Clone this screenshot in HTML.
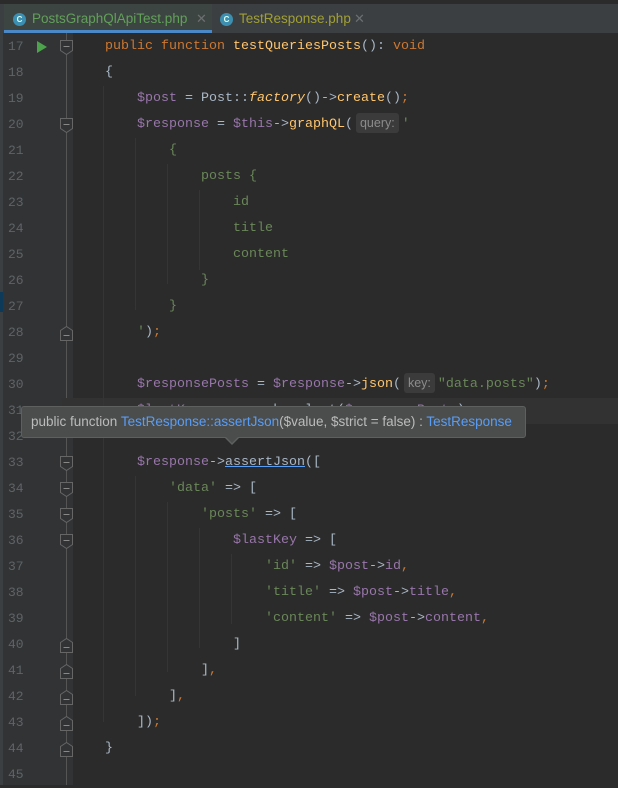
<!DOCTYPE html>
<html><head><meta charset="utf-8"><style>
*{margin:0;padding:0;box-sizing:border-box}
body{width:618px;height:785px;background:#2b2b2b;overflow:hidden;position:relative;font-family:"Liberation Mono",monospace;font-size:13.33px}
.tabs{position:absolute;left:0;top:0;width:618px;height:33px;background:#3c3f41;border-top:4px solid #2b2b2b}
.tab{position:absolute;top:0;height:29px;font-family:"Liberation Sans",sans-serif;font-size:13.5px;line-height:29px}
.ic{position:absolute;top:9px;width:13px;height:13px;border-radius:50%;background:#3c8fb0;color:#dfe;font-size:8px;line-height:13px;text-align:center;font-weight:bold}
.x{position:absolute;top:0;color:#6c6f71;font-size:13px}
.gut{position:absolute;left:3px;top:33px;width:70px;height:752px;background:#313335}
.strip{position:absolute;left:0;top:33px;width:3px;height:752px;background:#3c3f41}
.vl{position:absolute;left:66px;top:33px;width:1px;height:752px;background:#555}
.ln{position:absolute;left:8px;width:20px;color:#606366;font-size:13px;line-height:26px}
.code{position:absolute;left:105px;white-space:pre;line-height:26px;color:#a9b7c6}
.k{color:#cc7832}.f{color:#ffc66d}.v{color:#9876aa}.s{color:#6a8759}.i{font-style:italic}
.guide{position:absolute;width:1px;background:#353535}
.fold{position:absolute;left:60px;width:13px;height:15px}
.hint{display:inline-block;background:#3b3b3b;color:#8c8c8c;font-family:"Liberation Sans",sans-serif;font-size:12.5px;padding:0 4px;line-height:20px;border-radius:3px;margin:0 3px}
.tip{position:absolute;left:21px;top:406px;width:505px;height:32px;background:#4b4d4d;border:1px solid #5e6060;border-radius:3px;font-family:"Liberation Sans",sans-serif;font-size:13.5px;color:#bbbbbb;line-height:30px;padding-left:9px;white-space:nowrap}
.tip b{font-weight:normal;color:#589df6}
</style></head><body>
<svg width="0" height="0" style="position:absolute"><defs><symbol id="fo" viewBox="0 0 13 15"><path d="M0.5 4.5 L6.5 0.5 L12.5 4.5 V14.5 H0.5 Z" fill="#313335" stroke="#666"/><path d="M3.5 9.5 H9.5" stroke="#888"/></symbol><symbol id="fc" viewBox="0 0 13 15"><path d="M0.5 0.5 H12.5 V10.5 L6.5 14.5 L0.5 10.5 Z" fill="#313335" stroke="#666"/><path d="M3.5 6.5 H9.5" stroke="#888"/></symbol></defs></svg>
<div class="tabs">
 <div class="tab" style="left:4px;width:208px;background:#3d4542;color:#62a05a;border-bottom:3px solid #4a88c7;height:29px">
  <div class="ic" style="left:9px">C</div><span style="position:absolute;left:28px;top:1px;line-height:28px">PostsGraphQlApiTest.php</span><span class="x" style="left:192px;line-height:29px">✕</span></div>
 <div class="tab" style="left:212px;width:160px;background:#3c3f41;color:#a0a035">
  <div class="ic" style="left:8px">C</div><span style="position:absolute;left:27px;top:1px;line-height:28px">TestResponse.php</span><span class="x" style="left:142px;line-height:29px">✕</span></div>
</div>
<div class="strip"></div><div style="position:absolute;left:0;top:292px;width:3px;height:20px;background:#0d3a58"></div>
<div class="gut"></div>
<div class="vl"></div>
<div style="position:absolute;left:62px;top:398px;width:556px;height:26px;background:#323232"></div>
<div class="guide" style="left:103px;top:86px;height:636px"></div>
<div class="guide" style="left:135px;top:138px;height:172px"></div>
<div class="guide" style="left:135px;top:476px;height:220px"></div>
<div class="guide" style="left:167px;top:164px;height:120px"></div>
<div class="guide" style="left:167px;top:502px;height:170px"></div>
<div class="guide" style="left:199px;top:190px;height:80px"></div>
<div class="guide" style="left:199px;top:528px;height:120px"></div>
<div class="guide" style="left:231px;top:554px;height:70px"></div>
<div style="position:absolute;left:37px;top:41px;width:0;height:0;border-left:10px solid #4ca34c;border-top:6px solid transparent;border-bottom:6px solid transparent"></div>
<svg class="fold" style="top:40px"><use href="#fc"/></svg><svg class="fold" style="top:118px"><use href="#fc"/></svg><svg class="fold" style="top:326px"><use href="#fo"/></svg>
<svg class="fold" style="top:456px"><use href="#fc"/></svg><svg class="fold" style="top:482px"><use href="#fc"/></svg><svg class="fold" style="top:508px"><use href="#fc"/></svg><svg class="fold" style="top:534px"><use href="#fc"/></svg>
<svg class="fold" style="top:638px"><use href="#fo"/></svg><svg class="fold" style="top:664px"><use href="#fo"/></svg><svg class="fold" style="top:690px"><use href="#fo"/></svg><svg class="fold" style="top:716px"><use href="#fo"/></svg><svg class="fold" style="top:742px"><use href="#fo"/></svg>

<div class="ln" style="top:34px">17</div><div class="ln" style="top:60px">18</div><div class="ln" style="top:86px">19</div><div class="ln" style="top:112px">20</div><div class="ln" style="top:138px">21</div><div class="ln" style="top:164px">22</div><div class="ln" style="top:190px">23</div><div class="ln" style="top:216px">24</div><div class="ln" style="top:242px">25</div><div class="ln" style="top:268px">26</div><div class="ln" style="top:294px">27</div><div class="ln" style="top:320px">28</div><div class="ln" style="top:346px">29</div><div class="ln" style="top:372px">30</div><div class="ln" style="top:398px">31</div><div class="ln" style="top:424px">32</div><div class="ln" style="top:450px">33</div><div class="ln" style="top:476px">34</div><div class="ln" style="top:502px">35</div><div class="ln" style="top:528px">36</div><div class="ln" style="top:554px">37</div><div class="ln" style="top:580px">38</div><div class="ln" style="top:606px">39</div><div class="ln" style="top:632px">40</div><div class="ln" style="top:658px">41</div><div class="ln" style="top:684px">42</div><div class="ln" style="top:710px">43</div><div class="ln" style="top:736px">44</div><div class="ln" style="top:762px">45</div>

<div class="code" style="top:34px"><span class="k">public function </span><span class="f">testQueriesPosts</span>(): <span class="k">void</span></div>
<div class="code" style="top:60px">{</div>
<div class="code" style="top:86px">    <span class="v">$post</span> = Post::<span class="f i">factory</span>()-><span class="f">create</span>()<span class="k">;</span></div>
<div class="code" style="top:112px">    <span class="v">$response</span> = <span class="v">$this</span>-><span class="f">graphQL</span>(<span class="hint">query:</span><span class="s">'</span></div>
<div class="code s" style="top:138px">        {</div>
<div class="code s" style="top:164px">            posts {</div>
<div class="code s" style="top:190px">                id</div>
<div class="code s" style="top:216px">                title</div>
<div class="code s" style="top:242px">                content</div>
<div class="code s" style="top:268px">            }</div>
<div class="code s" style="top:294px">        }</div>
<div class="code" style="top:320px">    <span class="s">'</span>)<span class="k">;</span></div>
<div class="code" style="top:372px">    <span class="v">$responsePosts</span> = <span class="v">$response</span>-><span class="f">json</span>(<span class="hint">key:</span><span class="s">"data.posts"</span>)<span class="k">;</span></div>
<div class="code" style="top:398px">    <span class="v">$lastKey</span> = array_key_last(<span class="v">$responsePosts</span>)<span class="k">;</span></div>
<div class="code" style="top:450px">    <span class="v">$response</span>-><span class="f" style="color:#a9b7c6;text-decoration:underline;text-decoration-color:#589df6">assertJson</span>([</div>
<div class="code" style="top:476px">        <span class="s">'data'</span> => [</div>
<div class="code" style="top:502px">            <span class="s">'posts'</span> => [</div>
<div class="code" style="top:528px">                <span class="v">$lastKey</span> => [</div>
<div class="code" style="top:554px">                    <span class="s">'id'</span> => <span class="v">$post</span>-><span class="v">id</span><span class="k">,</span></div>
<div class="code" style="top:580px">                    <span class="s">'title'</span> => <span class="v">$post</span>-><span class="v">title</span><span class="k">,</span></div>
<div class="code" style="top:606px">                    <span class="s">'content'</span> => <span class="v">$post</span>-><span class="v">content</span><span class="k">,</span></div>
<div class="code" style="top:632px">                ]</div>
<div class="code" style="top:658px">            ]<span class="k">,</span></div>
<div class="code" style="top:684px">        ]<span class="k">,</span></div>
<div class="code" style="top:710px">    ])<span class="k">;</span></div>
<div class="code" style="top:736px">}</div>

<div class="tip">public function <b>TestResponse::assertJson</b>($value, $strict = false) : <b>TestResponse</b></div>
<div style="position:absolute;left:224px;top:437px;width:0;height:0;border-left:8px solid transparent;border-right:8px solid transparent;border-top:8px solid #5e6060"></div>
<div style="position:absolute;left:225px;top:436px;width:0;height:0;border-left:7px solid transparent;border-right:7px solid transparent;border-top:7px solid #4b4d4d"></div>
</body></html>
